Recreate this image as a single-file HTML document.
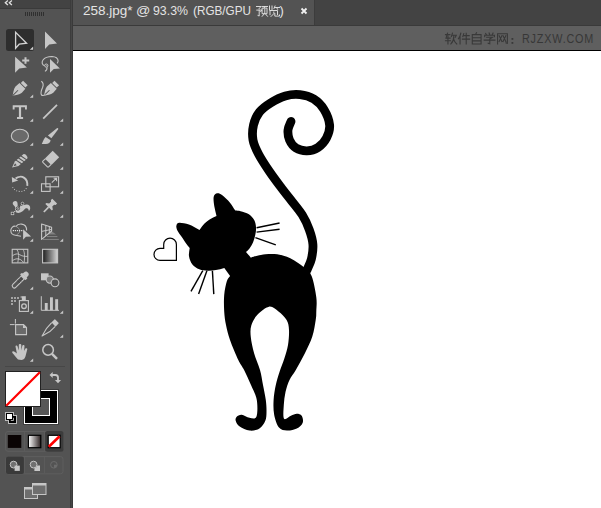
<!DOCTYPE html><html><head><meta charset="utf-8"><style>html,body{margin:0;padding:0;width:601px;height:508px;overflow:hidden;background:#fff;font-family:"Liberation Sans",sans-serif;}.a{position:absolute;}.t{position:absolute;top:3px;font-size:13px;line-height:16px;color:#e4e4e4;white-space:pre;}.w{position:absolute;top:32px;font-size:12px;line-height:14px;color:#373737;white-space:pre;}</style></head><body><div class="a" style="left:73px;top:0;width:528px;height:25px;background:#434343"></div><div class="a" style="left:73px;top:0;width:241px;height:25px;background:#535353"></div><div class="a" style="left:314px;top:0;width:1px;height:25px;background:#3c3c3c"></div><div class="a" style="left:73px;top:25px;width:528px;height:1px;background:#3a3a3a"></div><div class="a" style="left:73px;top:26px;width:528px;height:24px;background:#5f5f5f"></div><div class="a" style="left:73px;top:50px;width:528px;height:1px;background:#000"></div><div class="a" style="left:73px;top:51px;width:528px;height:457px;background:#fff"></div><span class="t" style="left:82.5px;transform:scaleX(1.04);transform-origin:0 0">258.jpg*</span><span class="t" style="left:136px;transform:scaleX(1.09);transform-origin:0 0">@</span><span class="t" style="left:152.6px;transform:scaleX(0.95);transform-origin:0 0">93.3%</span><span class="t" style="left:193px">(</span><span class="t" style="left:196.6px;transform:scaleX(0.9);transform-origin:0 0">RGB/GPU</span><span class="t" style="left:279.5px">)</span><svg class="a" style="left:0;top:0" width="601" height="60"><g transform="translate(256.0 5.5) scale(1.000)"><path d="M0.5 1H5L3 3.2M0.8 4.6H6L4.6 6.2M3.2 4.6V10.5L2 10M6 1H11.5M8.7 1L8.2 2.6M6.6 2.6H11V8.2H6.6ZM8.8 4V7.2M8.3 8.2L6.2 10.8M9.4 8.4L11.5 10.8" fill="none" stroke="#e0e0e0" stroke-width="0.95" stroke-linecap="square"/></g><g transform="translate(268.0 5.5) scale(1.000)"><path d="M1.5 0.5V4M4 0.5V4M7 0.5L6 3M6.6 2H11.5M8.6 2L9.6 3.8M2 5V9.2M2 5H9.5V9M5.8 6.5V8.2L3 11M6.8 8V10.6H11.5V9.5" fill="none" stroke="#e0e0e0" stroke-width="0.95" stroke-linecap="square"/></g><path d="M301.5 8.5L306.5 13.5M306.5 8.5L301.5 13.5" stroke="#f0f0f0" stroke-width="1.8"/><g transform="translate(445.0 32.7) scale(0.980)"><path d="M0.5 2H5M2.6 0.5L1 5.5H5.2M3 3.5V11.5M0.5 8.2H5.6M7.6 0.5L6.5 4M7 2.6H11.5L10.5 4.6M9 3.6C9 7.5 8 9.5 6 11.5M9 7C9.8 9.5 10.8 10.5 12 11.5" fill="none" stroke="#393939" stroke-width="1.12" stroke-linecap="square"/></g><g transform="translate(457.9 32.7) scale(0.980)"><path d="M3 0.5C2.5 3 1.5 5 0.5 6.2M2.2 3.5V11.5M6 1L5 4M5.6 3H11.5M4.6 6.6H12M8.5 0.5V11.5" fill="none" stroke="#393939" stroke-width="1.12" stroke-linecap="square"/></g><g transform="translate(470.8 32.7) scale(0.980)"><path d="M5.8 0L4.8 1.8M1.5 2H10.5V11.5H1.5ZM1.5 5.2H10.5M1.5 8.3H10.5" fill="none" stroke="#393939" stroke-width="1.12" stroke-linecap="square"/></g><g transform="translate(483.7 32.7) scale(0.980)"><path d="M2 0.8L2.8 2.2M5.5 0.4L6.2 2M9.6 0.4L8.6 2.2M1 4V2.6H11V4M3 4.6H9L6.2 6.5M0.5 7.6H11.5M6.2 6.3V11.2L4.6 10.8" fill="none" stroke="#393939" stroke-width="1.12" stroke-linecap="square"/></g><g transform="translate(496.6 32.7) scale(0.980)"><path d="M1 1V11.5M1 1H11V10.8L9.6 10.4M2.6 3.2L5.4 9M5.4 3.2L2.6 9M6.6 3.2L9.4 9M9.4 3.2L6.6 9" fill="none" stroke="#393939" stroke-width="1.12" stroke-linecap="square"/></g><rect x="511.5" y="38" width="1.8" height="1.8" fill="#393939"/><rect x="511.5" y="42" width="1.8" height="1.8" fill="#393939"/></svg><span class="w" style="left:521.6px;letter-spacing:0.9px;transform:scaleX(0.9);transform-origin:0 0">RJZXW.COM</span><svg width="73" height="508" viewBox="0 0 73 508" style="position:absolute;left:0;top:0"><rect x="0" y="0" width="70" height="8" fill="#434343"/><rect x="0" y="8" width="70" height="1" fill="#3a3a3a"/><rect x="0" y="9" width="70" height="499" fill="#535353"/><rect x="70" y="0" width="1" height="508" fill="#3c3c3c"/><rect x="71" y="0" width="1" height="508" fill="#464646"/><rect x="72" y="0" width="1" height="508" fill="#3a3a3a"/><path d="M7.9 0.5L5.3 2.8L7.9 5.1M11.9 0.5L9.3 2.8L11.9 5.1" fill="none" stroke="#e0e0e0" stroke-width="1.3"/><rect x="25" y="12" width="1" height="4" fill="#2f2f2f"/><rect x="27" y="12" width="1" height="4" fill="#2f2f2f"/><rect x="29" y="12" width="1" height="4" fill="#2f2f2f"/><rect x="31" y="12" width="1" height="4" fill="#2f2f2f"/><rect x="33" y="12" width="1" height="4" fill="#2f2f2f"/><rect x="35" y="12" width="1" height="4" fill="#2f2f2f"/><rect x="37" y="12" width="1" height="4" fill="#2f2f2f"/><rect x="39" y="12" width="1" height="4" fill="#2f2f2f"/><rect x="41" y="12" width="1" height="4" fill="#2f2f2f"/><rect x="43" y="12" width="1" height="4" fill="#2f2f2f"/><rect x="6" y="29" width="28" height="22" rx="2.5" fill="#2e2e2e"/><path d="M15.6 32.4L15.6 48.2L19.2 44.2L26.6 43.2Z" fill="none" stroke="#d2d2d2" stroke-width="1.3" stroke-linejoin="miter"/><path d="M33.2 46.5L33.2 49.8L29.8 49.8Z" fill="#d2d2d2"/><path d="M45 31.6L45 49L49.2 44.4L57 43.4Z" fill="#c6c6c6"/><path d="M15.1 56.7L15.1 72.8L19.3 68.5L26.9 67.6Z" fill="#c6c6c6"/><path d="M25.5 57.2V63.8M22.2 60.5H29.2" stroke="#c6c6c6" stroke-width="2"/><path d="M50 59.1L50 72.8L53.8 69L59.9 68.5Z" fill="#c6c6c6"/><path d="M44.6 65.8C42 64.8 41.4 62.2 43 60C44.8 57.6 48.6 56.5 52 56.5C55.6 56.6 58.2 58.3 58.1 61C58 62 57.6 62.8 57 63.4" fill="none" stroke="#c6c6c6" stroke-width="1.1"/><circle cx="46.3" cy="65.6" r="1.6" fill="none" stroke="#c6c6c6" stroke-width="1"/><path d="M46.4 64.8L47.4 65.6L46.4 66.4Z" fill="#c6c6c6"/><path d="M46.8 67.2C47.4 68.6 46.6 70.2 45 71.4" fill="none" stroke="#c6c6c6" stroke-width="1.1"/><g transform="translate(19.0 89.3) rotate(45) scale(0.9)"><rect x="-3.6" y="-10" width="7.2" height="3.6" fill="#c6c6c6"/><path d="M-4.6 -5.4H4.6L5 0.5C4.5 4 2 7 0 10C-2 7 -4.5 4 -5 0.5Z" fill="#c6c6c6"/><path d="M0 10V1.5" stroke="#535353" stroke-width="1.1"/></g><path d="M33.2 94.5L33.2 97.8L29.8 97.8Z" fill="#c6c6c6"/><g transform="translate(50.4 89.3) rotate(45) scale(0.9)"><rect x="-3.6" y="-10" width="7.2" height="3.6" fill="#c6c6c6"/><path d="M-4.6 -5.4H4.6L5 0.5C4.5 4 2 7 0 10C-2 7 -4.5 4 -5 0.5Z" fill="#c6c6c6"/><path d="M0 10V1.5" stroke="#535353" stroke-width="1.1"/></g><path d="M41.3 81.3C43 82.5 43.8 84.5 42.6 87.5C41.2 90.5 40.2 93 41.5 95C42.5 96 44 95.5 45.5 94.5" fill="none" stroke="#c6c6c6" stroke-width="1.1"/><path d="M12.7 105.2H26.9V109.4H25V107.3H21.1V117H23.1V118.9H17V117H18.9V107.3H14.6V109.4H12.7Z" fill="#c6c6c6"/><path d="M33.2 118.5L33.2 121.8L29.8 121.8Z" fill="#c6c6c6"/><path d="M43.2 118.6L57 104.9" stroke="#c6c6c6" stroke-width="1.8"/><path d="M63.2 118.5L63.2 121.8L59.8 121.8Z" fill="#c6c6c6"/><ellipse cx="19.9" cy="135.9" rx="8.6" ry="6.6" fill="#6a6a6a" stroke="#c6c6c6" stroke-width="1.1"/><path d="M33.2 142.5L33.2 145.8L29.8 145.8Z" fill="#c6c6c6"/><path d="M57.2 127.9C58.2 127.8 58.6 128.6 58 129.6L51.4 138.2L47.9 135.6Z" fill="#c6c6c6"/><path d="M45.6 137.1L50.6 140.2C50.4 142.4 48.6 144 45.8 144L41.8 144C42.8 142.6 43 139.8 45.6 137.1Z" fill="#c6c6c6"/><path d="M63.2 142.5L63.2 145.8L59.8 145.8Z" fill="#c6c6c6"/><g transform="translate(19.4 161.4) rotate(50)"><path d="M-2.9 -7.6C-2.9 -9.8 2.9 -9.8 2.9 -7.6V3.6L0 9.6L-2.9 3.6Z" fill="#c6c6c6"/><path d="M-3.5 -4.6L3.5 -6.6M-3.5 -1.4L3.5 -3.4M-3.5 1.8L3.5 -0.2" stroke="#535353" stroke-width="1.1"/><path d="M-1.3 4.6L1.3 4.6L0 7.6Z" fill="#535353"/></g><path d="M33.2 166.5L33.2 169.8L29.8 169.8Z" fill="#c6c6c6"/><g transform="translate(50.4 159.4) rotate(45)"><rect x="-4.6" y="-7.8" width="9.2" height="10.6" fill="#c6c6c6"/><rect x="-4.05" y="2.8" width="8.1" height="4.6" rx="0.8" fill="none" stroke="#c6c6c6" stroke-width="1.1"/></g><path d="M63.2 166.5L63.2 169.8L59.8 169.8Z" fill="#c6c6c6"/><path d="M15.6 178.4C18 176.6 21.8 176.2 24.2 177.9C26.6 179.6 27.6 182.4 27.3 185.8" fill="none" stroke="#c6c6c6" stroke-width="1.9"/><path d="M26.4 188.2C25 190.6 22.6 191.6 20 191.5C17 191.4 14.2 190 12.6 187.2" fill="none" stroke="#c6c6c6" stroke-width="1.1" stroke-dasharray="0.9 1.7"/><path d="M11.8 176.9L12.2 182.6L18.2 180.6Z" fill="#c6c6c6"/><path d="M33.2 190.5L33.2 193.8L29.8 193.8Z" fill="#c6c6c6"/><rect x="45.8" y="176.8" width="12.8" height="10" fill="none" stroke="#c6c6c6" stroke-width="1.1"/><rect x="41.5" y="183.8" width="8.6" height="7.6" fill="none" stroke="#c6c6c6" stroke-width="1.1"/><path d="M51.8 182.6L56.4 178.2M53.6 178.2H56.6V181.2" fill="none" stroke="#c6c6c6" stroke-width="1.1"/><path d="M63.2 190.5L63.2 193.8L59.8 193.8Z" fill="#c6c6c6"/><path d="M13.2 204.8C12.6 204 12.5 202.8 13.4 201.8C14.4 200.8 16.2 200.7 17 201.8C17.6 202.6 17.6 204 17.7 206.4C18.8 206.6 19.6 206.4 20.3 206.2C21.6 205.8 22.6 205.3 23.6 205C24.8 204.6 26 204.3 26.9 204.4C28 204.5 28.8 204.9 29.3 205.5C30 206.3 30.3 207.4 30.2 208.4C30.1 209.4 29.6 210.4 28.8 211.1C28.8 210 28.4 209.1 27.8 208.7C27.2 208.2 26.4 208.1 25.9 208.3C24.8 208.8 23.6 210.6 22.2 211.6C21 212.4 19.6 212.9 18.4 212.9C17.4 212.9 16.5 212.7 16 212.2C15.3 211.5 15 210.6 15.1 209.6C15.1 208.8 15.4 207.8 15.2 207.2C15 206.6 14.6 206.3 14.3 206C13.9 205.6 13.5 205.2 13.2 204.8Z" fill="#c6c6c6"/><path d="M12.6 213.4L15.4 210.6M20.4 205.6L22.4 203.6" stroke="#c6c6c6" stroke-width="0.9"/><path d="M15.4 210.6L20.4 205.6" stroke="#3c3c3c" stroke-width="0.8"/><rect x="11.2" y="212.2" width="2.6" height="2.5" fill="#3c3c3c" stroke="#c6c6c6" stroke-width="0.8"/><circle cx="22.5" cy="203.5" r="1.3" fill="#3c3c3c" stroke="#c6c6c6" stroke-width="0.8"/><circle cx="17.9" cy="208.5" r="1.7" fill="#c6c6c6" stroke="#3a3a3a" stroke-width="0.8"/><path d="M16.9 209.5L18.9 207.5" stroke="#3a3a3a" stroke-width="0.8"/><path d="M33.2 214.5L33.2 217.8L29.8 217.8Z" fill="#c6c6c6"/><g transform="translate(49.6 206.2) rotate(45)"><path d="M-3.4 -7.2H3.4V-5.2L2.2 -4.2V-1.6L4.6 0V1.4H-4.6V0L-2.2 -1.6V-4.2L-3.4 -5.2Z" fill="#c6c6c6"/><path d="M0 1.4V8.2" stroke="#c6c6c6" stroke-width="1.7"/></g><path d="M63.2 214.5L63.2 217.8L59.8 217.8Z" fill="#c6c6c6"/><path d="M15.6 226.2C12.8 225.8 10.8 228 10.8 230.6C10.8 233.2 12.8 235.2 15.4 235.2L21 236.2" fill="none" stroke="#c6c6c6" stroke-width="1.1"/><path d="M16.6 227C18.6 227.8 19.6 229 19.6 230.8C19.6 232.6 18.6 234 16.6 234.6" fill="none" stroke="#9a9a9a" stroke-width="0.9"/><path d="M15.8 226.6C17.2 224.6 19.4 223.9 21.6 224.1C24.6 224.5 26.7 227 26.6 230.4" fill="none" stroke="#c6c6c6" stroke-width="1.1"/><rect x="12.8" y="230" width="1.2" height="1.2" fill="#e0e0e0"/><rect x="14.8" y="230" width="1.2" height="1.2" fill="#e0e0e0"/><rect x="16.9" y="230" width="1.2" height="1.2" fill="#e0e0e0"/><rect x="19.0" y="230" width="1.2" height="1.2" fill="#e0e0e0"/><rect x="21.1" y="230" width="1.2" height="1.2" fill="#e0e0e0"/><path d="M23.1 229.2L23.1 239.8L25.9 236.8L31.1 236.5Z" fill="#c6c6c6"/><path d="M33.2 238.5L33.2 241.8L29.8 241.8Z" fill="#c6c6c6"/><path d="M51.6 231.2L56.2 234.4H48Z" fill="#808080"/><path d="M47 236.6H57.4M43 239.4H58.8" stroke="#8c8c8c" stroke-width="0.9"/><path d="M41.6 224V239.4L51.6 231V227.2Z" fill="none" stroke="#c6c6c6" stroke-width="1.1" stroke-linejoin="round"/><path d="M45.8 225.3V236.2M49.3 226.4V233.2M41.6 231.4L51.6 229.4" fill="none" stroke="#c6c6c6" stroke-width="1"/><path d="M63.2 238.5L63.2 241.8L59.8 241.8Z" fill="#c6c6c6"/><rect x="12.2" y="249.3" width="15.6" height="13.6" fill="none" stroke="#c6c6c6" stroke-width="1.1"/><path d="M16.8 249.4C18.4 251.8 19 254.6 18.6 257.6C18.3 259.6 18 261.2 17.8 262.6M23 249.4C24.6 251.8 24.9 255.6 24.2 262.6M12.3 255.8C14.8 254 17.4 253.2 19.6 254.6C21.6 255.9 24 256.6 27.8 256.4M12.3 260.8C14.6 258.8 17.4 258.2 20.2 259.4C21.8 260.2 22.8 261.4 23.6 262.6" fill="none" stroke="#c6c6c6" stroke-width="0.9"/><defs><linearGradient id="gr" x1="0" x2="1"><stop offset="0" stop-color="#1c1c1c"/><stop offset="1" stop-color="#d4d4d4"/></linearGradient><linearGradient id="gr2" x1="0" x2="1"><stop offset="0" stop-color="#ffffff"/><stop offset="1" stop-color="#2a2020"/></linearGradient></defs><rect x="42.6" y="249.3" width="15" height="13.6" fill="url(#gr)" stroke="#c6c6c6" stroke-width="1.1"/><g transform="translate(20.2 280) rotate(45)"><path d="M-2.7 -6V-8.4C-2.7 -11.6 2.7 -11.6 2.7 -8.4V-6Z" fill="#c6c6c6"/><rect x="-3.9" y="-6.4" width="7.8" height="2.8" rx="0.6" fill="#c6c6c6"/><path d="M-2.1 -3.6H2.1V8.4C2.1 11 -2.1 11 -2.1 8.4Z" fill="none" stroke="#c6c6c6" stroke-width="1.1"/><path d="M-1.6 -1.6H1.6M-1.6 0.4H1.6M-1.6 2.4H1.6" stroke="#3c3c3c" stroke-width="0.8"/></g><path d="M33.2 286.5L33.2 289.8L29.8 289.8Z" fill="#c6c6c6"/><rect x="41" y="273.3" width="7.6" height="7" fill="#c6c6c6"/><circle cx="49.8" cy="279.6" r="3.6" fill="#7a7a7a" stroke="#c6c6c6" stroke-width="1.1"/><circle cx="55" cy="282.8" r="3.9" fill="#535353" stroke="#c6c6c6" stroke-width="1.1"/><rect x="11.0" y="297.0" width="2" height="2" fill="#a4a4a4"/><rect x="14.0" y="297.0" width="2" height="2" fill="#a4a4a4"/><rect x="17.0" y="297.0" width="2" height="2" fill="#a4a4a4"/><rect x="11.0" y="300.0" width="2" height="2" fill="#a4a4a4"/><rect x="14.0" y="300.0" width="2" height="2" fill="#a4a4a4"/><rect x="11.0" y="303.0" width="2" height="2" fill="#a4a4a4"/><rect x="19.4" y="300.6" width="9" height="10.8" fill="none" stroke="#c6c6c6" stroke-width="1.1"/><circle cx="24" cy="306.2" r="2.3" fill="none" stroke="#c6c6c6" stroke-width="1.3"/><path d="M21.8 296.2H25.8V300H21.8Z" fill="#c6c6c6"/><path d="M20.5 297H22" stroke="#c6c6c6"/><path d="M33.2 310.5L33.2 313.8L29.8 313.8Z" fill="#c6c6c6"/><path d="M41.3 296.2V310.3H59" fill="none" stroke="#c6c6c6" stroke-width="1"/><rect x="44.8" y="303" width="2.9" height="7.3" fill="#c6c6c6"/><rect x="50" y="297.3" width="2.9" height="13" fill="#c6c6c6"/><rect x="55.2" y="299.2" width="2.9" height="11.1" fill="#c6c6c6"/><path d="M63.2 310.5L63.2 313.8L59.8 313.8Z" fill="#c6c6c6"/><path d="M9.9 324.6H14.6M15.4 319V323.6" stroke="#c6c6c6" stroke-width="1"/><path d="M15.6 324.6H23.5L26.5 327.6V334.6H15.6Z" fill="#6a6a6a" stroke="#c6c6c6" stroke-width="1.1"/><path d="M23 324.6V328H26.5Z" fill="#c6c6c6"/><g transform="translate(49.4 328.6) rotate(45)"><rect x="-2.9" y="-10.6" width="5.8" height="4.8" rx="0.6" fill="#c6c6c6"/><path d="M-2.5 -5.8L-2.1 2.2L0 10.4L2.5 1.2V-5.8" fill="none" stroke="#c6c6c6" stroke-width="1.1" stroke-linejoin="round"/></g><path d="M63.2 334.5L63.2 337.8L59.8 337.8Z" fill="#c6c6c6"/><path d="M18 359.6C16.5 358 15 356 13.8 354.6C12.8 353.4 12 352.6 12.2 351.7C12.5 350.8 13.8 351 15 352L16.9 353.4L15.5 346.6C15.3 345.4 17 345 17.4 346.1L18.8 350.4L18.8 344.9C18.8 343.7 21.3 343.7 21.3 344.9L21.3 350.4L22.3 345.7C22.5 344.6 24.6 344.8 24.5 346L24.1 351L25.3 348.7C25.7 347.8 27.6 348.2 27.3 349.3L25.9 354.8C25.3 357.8 24.2 359.9 21.5 359.9Z" fill="#c6c6c6"/><path d="M33.2 358.5L33.2 361.8L29.8 361.8Z" fill="#c6c6c6"/><circle cx="48.1" cy="349.9" r="5.3" fill="none" stroke="#c6c6c6" stroke-width="1.5"/><path d="M52 353.8L57 358.8" stroke="#c6c6c6" stroke-width="2.4"/><rect x="5" y="366" width="60" height="1" fill="#474747"/><rect x="23" y="389" width="36" height="36" fill="#3c3c3c"/><rect x="24" y="390" width="34" height="34" fill="#ffffff"/><rect x="25" y="391" width="32" height="32" fill="#000"/><rect x="32" y="398" width="18" height="18" fill="#ffffff"/><rect x="33" y="399" width="16" height="16" fill="#575757"/><rect x="5" y="371" width="36" height="36" fill="#222"/><rect x="6" y="372" width="34" height="34" fill="#fff"/><path d="M6.2 405.8L39.8 372.2" stroke="#ff0000" stroke-width="2.2"/><path d="M52 375H55.4C57 375 58 376 58 377.6V380.6" fill="none" stroke="#c6c6c6" stroke-width="1.8"/><path d="M49.5 374.9L52.7 371.9V377.9Z" fill="#c6c6c6"/><path d="M54.9 380.1H61.1L58 383.3Z" fill="#c6c6c6"/><rect x="5" y="412" width="9" height="9" fill="#bdbdbd"/><rect x="8" y="415" width="9" height="9" fill="#bdbdbd"/><rect x="6" y="413" width="7" height="7" fill="#000"/><rect x="9" y="416" width="7" height="7" fill="#000"/><rect x="7" y="414" width="5" height="5" fill="#fff"/><path d="M13.5 417.8V420.5H10.8" fill="none" stroke="#bdbdbd" stroke-width="0.9"/><rect x="5.5" y="431.5" width="57.5" height="19.8" rx="2.5" fill="none" stroke="#5e5e5e" stroke-width="1"/><rect x="45" y="431" width="18.5" height="20.8" rx="2.5" fill="#3c3c3c"/><path d="M24.6 432V451M44.6 432V451" stroke="#5c5c5c" stroke-width="1"/><rect x="7.8" y="435" width="13.5" height="12.9" fill="#0a0404"/><rect x="28.4" y="435.3" width="12.4" height="12.4" fill="url(#gr2)" stroke="#000" stroke-width="1.2"/><rect x="48.2" y="435.3" width="12" height="12.4" fill="#fff" stroke="#000" stroke-width="1.2"/><path d="M48.8 446.8L59.6 436.2" stroke="#ff0000" stroke-width="2.6"/><rect x="5.8" y="456.6" width="57.2" height="17.2" rx="2.5" fill="none" stroke="#5e5e5e" stroke-width="1"/><rect x="6" y="456.5" width="18" height="17.5" rx="2" fill="#3a3a3a"/><path d="M24.4 457V473.5M44.6 457V473.5" stroke="#5c5c5c" stroke-width="1"/><circle cx="13.6" cy="464.6" r="3.4" fill="#707070" stroke="#c6c6c6" stroke-width="1"/><rect x="14.6" y="465.6" width="5.2" height="5.3" fill="#c6c6c6"/><circle cx="33.6" cy="464.6" r="3.4" fill="#707070" stroke="#c6c6c6" stroke-width="1"/><path d="M37.2 465.6H40V470.9H34.4V468.3C36 468 37 467 37.2 465.6Z" fill="#c6c6c6"/><circle cx="53.9" cy="464.8" r="3.3" fill="none" stroke="#6c6c6c" stroke-width="1"/><path d="M54 464.8H57.2C57 466.5 55.8 467.8 54 468.1Z" fill="#6c6c6c"/><rect x="24.5" y="487.5" width="13" height="11" fill="#6e6e6e" stroke="#c6c6c6" stroke-width="1"/><rect x="24.5" y="487.5" width="8" height="2" fill="#c6c6c6"/><rect x="32.5" y="483.5" width="13.5" height="11" fill="#6e6e6e" stroke="#c6c6c6" stroke-width="1"/><rect x="32.5" y="483.5" width="13.5" height="2" fill="#c6c6c6"/></svg><svg width="601" height="508" viewBox="0 0 601 508" style="position:absolute;left:0;top:0"><path d="M217.20 193.30 C218.58 193.00 219.87 193.43 222.00 195.00 C224.13 196.57 227.78 200.10 230.00 202.70 C232.22 205.30 233.53 207.97 235.30 210.60 C237.07 210.80 238.33 210.60 240.60 211.20 C242.87 211.80 246.63 212.72 248.90 214.20 C251.17 215.68 253.02 217.93 254.20 220.10 C255.38 222.27 255.80 224.83 256.00 227.20 C256.20 229.57 255.90 231.75 255.40 234.30 C254.90 236.85 253.98 240.15 253.00 242.50 C252.02 244.85 250.67 246.82 249.50 248.40 C248.33 249.98 247.17 250.80 246.00 252.00 C247.63 253.90 249.27 255.80 250.90 257.70 C251.80 257.37 251.18 257.27 253.60 256.70 C256.02 256.13 261.47 254.70 265.40 254.30 C269.33 253.90 273.05 253.63 277.20 254.30 C281.35 254.97 285.75 256.07 290.30 258.30 C294.85 260.53 300.95 264.75 304.50 267.70 C308.05 270.65 309.63 271.08 311.60 276.00 C313.57 280.92 315.52 291.30 316.30 297.20 C317.08 303.10 316.40 307.60 316.30 311.40 C316.20 315.20 316.37 315.80 315.70 320.00 C315.03 324.20 314.10 331.05 312.30 336.60 C310.50 342.15 307.65 347.73 304.90 353.30 C302.15 358.87 298.37 365.55 295.80 370.00 C293.23 374.45 291.22 376.33 289.50 380.00 C287.78 383.67 286.45 387.83 285.50 392.00 C284.55 396.17 284.05 400.55 283.80 405.00 C283.55 409.45 282.82 416.90 284.00 418.70 C285.18 420.50 288.77 416.62 290.90 415.80 C293.03 414.98 295.00 413.80 296.80 413.80 C298.60 413.80 300.72 414.32 301.70 415.80 C302.68 417.28 303.52 420.57 302.70 422.70 C301.88 424.83 299.43 427.28 296.80 428.60 C294.17 429.92 289.87 430.77 286.90 430.60 C283.93 430.43 281.12 430.20 279.00 427.60 C276.88 425.00 275.10 419.60 274.20 415.00 C273.30 410.40 273.33 405.00 273.60 400.00 C273.87 395.00 274.82 389.67 275.80 385.00 C276.78 380.33 278.05 376.50 279.50 372.00 C280.95 367.50 283.08 362.50 284.50 358.00 C285.92 353.50 287.25 349.67 288.00 345.00 C288.75 340.33 289.23 334.17 289.00 330.00 C288.77 325.83 288.35 323.10 286.60 320.00 C284.85 316.90 281.43 313.62 278.50 311.40 C275.57 309.18 272.55 306.10 269.00 306.70 C265.45 307.30 260.15 311.85 257.20 315.00 C254.25 318.15 252.37 321.93 251.30 325.60 C250.23 329.27 250.33 332.38 250.80 337.00 C251.27 341.62 252.57 347.80 254.10 353.30 C255.63 358.80 258.52 364.72 260.00 370.00 C261.48 375.28 262.03 380.00 263.00 385.00 C263.97 390.00 265.22 395.50 265.80 400.00 C266.38 404.50 266.58 408.55 266.50 412.00 C266.42 415.45 266.48 417.93 265.30 420.70 C264.12 423.47 262.03 426.95 259.40 428.60 C256.77 430.25 252.78 430.93 249.50 430.60 C246.22 430.27 242.00 428.25 239.70 426.60 C237.40 424.95 236.20 422.33 235.70 420.70 C235.20 419.07 235.70 417.78 236.70 416.80 C237.70 415.82 239.57 414.63 241.70 414.80 C243.83 414.97 247.05 417.47 249.50 417.80 C251.95 418.13 255.18 419.77 256.40 416.80 C257.62 413.83 257.70 405.30 256.80 400.00 C255.90 394.70 253.12 390.00 251.00 385.00 C248.88 380.00 246.22 374.17 244.10 370.00 C241.98 365.83 240.65 365.00 238.30 360.00 C235.95 355.00 232.05 345.83 230.00 340.00 C227.95 334.17 226.97 329.77 226.00 325.00 C225.03 320.23 224.50 316.42 224.20 311.40 C223.90 306.38 223.75 299.97 224.20 294.90 C224.65 289.83 225.92 284.17 226.90 281.00 C227.88 277.83 229.03 277.60 230.10 275.90 C228.17 273.23 226.23 270.57 224.30 267.90 C221.50 268.60 218.68 269.53 215.90 270.00 C213.12 270.47 210.37 270.82 207.60 270.70 C204.83 270.58 201.83 270.33 199.30 269.30 C196.77 268.27 194.12 266.68 192.40 264.50 C190.68 262.32 189.45 258.95 189.00 256.20 C188.55 253.45 189.47 250.73 189.70 248.00 C188.63 246.67 187.82 245.83 186.50 244.00 C185.18 242.17 183.37 239.35 181.80 237.00 C180.23 234.65 177.98 231.87 177.10 229.90 C176.22 227.93 176.12 226.38 176.50 225.20 C176.88 224.02 177.33 222.90 179.40 222.80 C181.47 222.70 185.55 223.42 188.90 224.60 C192.25 225.78 195.97 228.13 199.50 229.90 C201.17 227.80 202.75 225.38 204.50 223.60 C206.25 221.82 208.00 220.47 210.00 219.20 C212.00 217.93 214.33 217.07 216.50 216.00 C215.77 212.77 214.77 209.50 214.30 206.30 C213.83 203.10 213.22 198.97 213.70 196.80 C214.18 194.63 215.82 193.60 217.20 193.30Z" fill="#000"/><path d="M291.00 121.50 C290.50 122.92 288.25 126.92 288.00 130.00 C287.75 133.08 288.17 137.00 289.50 140.00 C290.83 143.00 293.10 146.20 296.00 148.00 C298.90 149.80 303.23 150.88 306.90 150.80 C310.57 150.72 314.73 149.63 318.00 147.50 C321.27 145.37 324.57 141.75 326.50 138.00 C328.43 134.25 330.02 129.75 329.60 125.00 C329.18 120.25 326.63 113.83 324.00 109.50 C321.37 105.17 317.80 101.48 313.80 99.00 C309.80 96.52 304.75 95.12 300.00 94.60 C295.25 94.08 290.20 94.52 285.30 95.90 C280.40 97.28 274.90 100.22 270.60 102.90 C266.30 105.58 262.35 108.32 259.50 112.00 C256.65 115.68 254.58 120.33 253.50 125.00 C252.42 129.67 252.17 135.17 253.00 140.00 C253.83 144.83 255.78 148.78 258.50 154.00 C261.22 159.22 265.48 165.65 269.30 171.30 C273.12 176.95 277.80 183.12 281.40 187.90 C285.00 192.68 287.43 195.52 290.90 200.00 C294.37 204.48 299.15 209.88 302.20 214.80 C305.25 219.72 307.42 224.58 309.20 229.50 C310.98 234.42 312.53 239.38 312.90 244.30 C313.27 249.22 312.38 254.72 311.40 259.00 C310.42 263.28 307.73 268.17 307.00 270.00" fill="none" stroke="#000" stroke-width="8.8" stroke-linecap="round"/><line x1="202.8" y1="270.7" x2="191.0" y2="291.4" stroke="#000" stroke-width="1.4"/><line x1="206.9" y1="270.7" x2="198.6" y2="294.1" stroke="#000" stroke-width="1.4"/><line x1="212.4" y1="270.7" x2="213.8" y2="294.1" stroke="#000" stroke-width="1.4"/><line x1="256.6" y1="227.8" x2="279.6" y2="223.0" stroke="#000" stroke-width="1.4"/><line x1="256.6" y1="232.1" x2="279.6" y2="229.3" stroke="#000" stroke-width="1.4"/><line x1="255.4" y1="237.6" x2="275.8" y2="244.9" stroke="#000" stroke-width="1.4"/><path d="M176.4 260.4 L176.4 244.5 A6.35 6.35 0 0 0 163.7 244.5 L163.7 248.4 L160 248.4 A6 6 0 0 0 160 260.4 Z" fill="none" stroke="#000" stroke-width="1.2" stroke-linejoin="miter"/></svg></body></html>
